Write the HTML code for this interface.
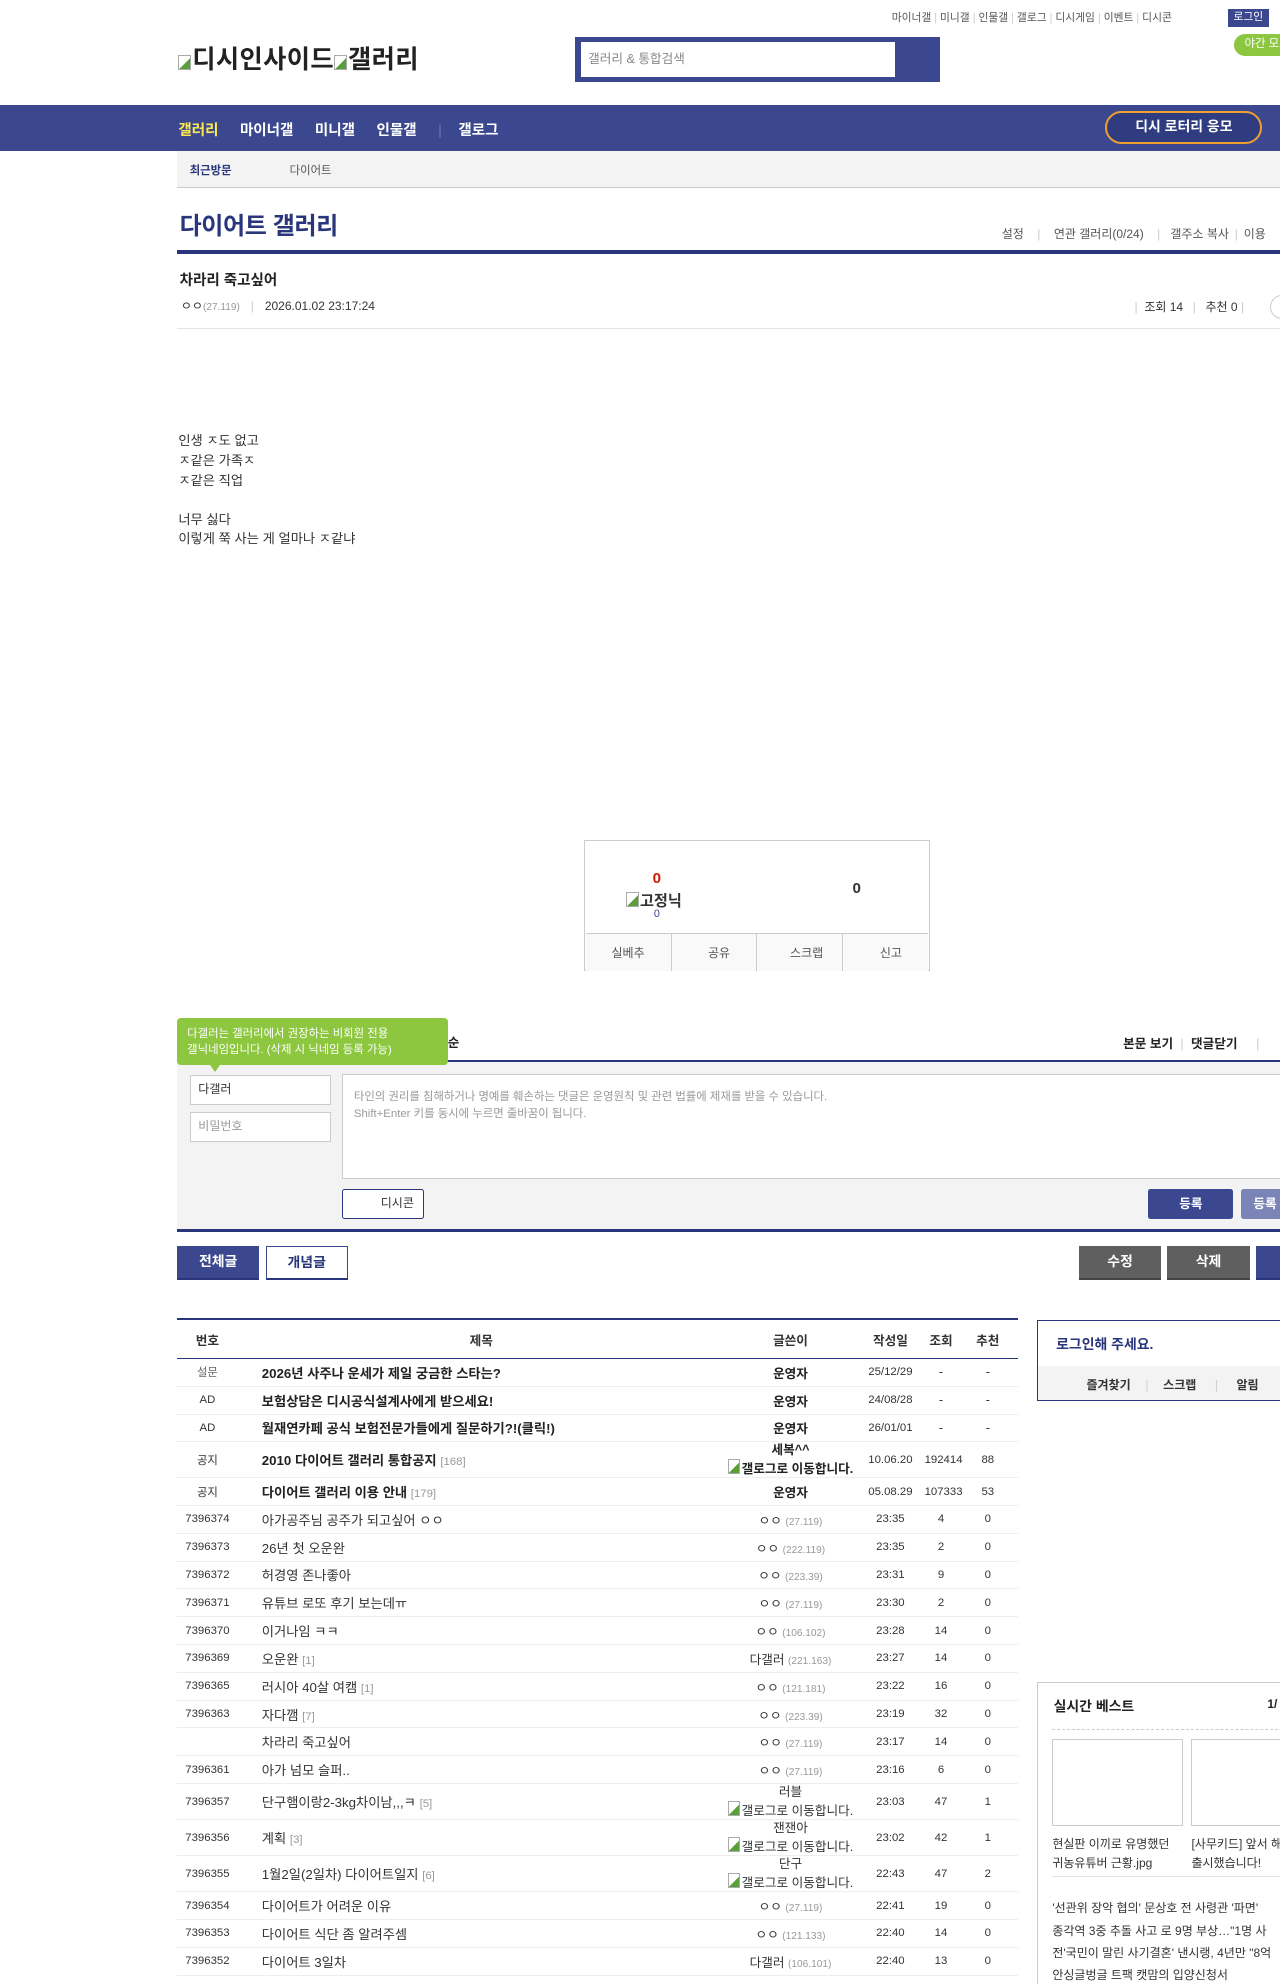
<!DOCTYPE html>
<html><head><meta charset="utf-8">
<style>
html,body{margin:0;padding:0;background:#fff;overflow:hidden}
body{width:1280px;height:1984px}
#w{zoom:1.26482;width:1012px;height:1569px;position:relative;overflow:hidden;font-family:"Liberation Sans","Noto Sans CJK KR",sans-serif;color:#333}
.a{position:absolute;white-space:nowrap}
.bi{display:inline-block;width:10px;height:12px;border:1px solid #aaa;box-sizing:border-box;background:linear-gradient(135deg,#fff 55%,#5a9e3a 56%);vertical-align:-1px;margin-right:1px}
table{border-collapse:collapse;table-layout:fixed;width:665px}
td{font-size:10px;color:#333;text-align:center;border-bottom:1px solid #eee;padding:0;white-space:nowrap;overflow:hidden;vertical-align:middle}
td.t{text-align:left;padding-left:19px;font-size:10.5px}
.b td.t,.b td.w{font-weight:bold;color:#222}
.ip{color:#999;font-size:8px}
.rp{color:#999;font-size:9px}
.w2{line-height:13px}
</style></head><body><div id="w">
<div class="a" style="left:705px;top:8px;font-size:8.5px;color:#555">마이너갤 <span style="color:#ccc">|</span> 미니갤 <span style="color:#ccc">|</span> 인물갤 <span style="color:#ccc">|</span> 갤로그 <span style="color:#ccc">|</span> 디시게임 <span style="color:#ccc">|</span> 이벤트 <span style="color:#ccc">|</span> 디시콘</div>
<div class="a" style="left:971px;top:7px;width:32px;height:14px;background:#3b4890;color:#fff;font-size:8.5px;line-height:14px;text-align:center">로그인</div>
<div class="a" style="left:976px;top:27px;width:50px;height:17px;border-radius:9px;background:#8dc63f;color:#fff;font-size:9px;line-height:17px;padding-left:8px">야간 모드</div>
<div class="a" style="left:141px;top:32px;font-size:20px;font-weight:bold;color:#222;letter-spacing:0.3px"><span class="bi"></span>디시인사이드<span class="bi"></span>갤러리</div>
<div class="a" style="left:455px;top:29px;width:288px;height:36px;background:#3b4890"></div>
<div class="a" style="left:459px;top:33px;width:249px;height:28px;background:#fff;font-size:10px;color:#888;line-height:28px;padding-left:6px;box-sizing:border-box">갤러리 &amp; 통합검색</div>
<div class="a" style="left:0;top:83px;width:1012px;height:36px;background:#3b4890"></div>
<div class="a" style="left:141px;top:94px;font-size:11.5px;font-weight:bold;color:#fff"><span style="color:#ffe94f">갤러리</span><span style="margin-left:17px">마이너갤</span><span style="margin-left:17px">미니갤</span><span style="margin-left:17px">인물갤</span><span style="margin-left:17px;color:#6a75b0;font-weight:normal">|</span><span style="margin-left:13px">갤로그</span></div>
<div class="a" style="left:874px;top:88px;width:124px;height:26px;border:2px solid #f0a030;border-radius:14px;box-sizing:border-box;background:#2f3c80;color:#fff;font-size:11px;font-weight:bold;text-align:center;line-height:22px">디시 로터리 응모</div>
<div class="a" style="left:140px;top:119px;width:872px;height:29px;background:#f3f3f3;border-bottom:1px solid #ccc"></div>
<div class="a" style="left:150px;top:128px;font-size:9px;font-weight:bold;color:#29367c">최근방문</div>
<div class="a" style="left:229px;top:128px;font-size:9px;color:#555">다이어트</div>
<div class="a" style="left:142px;top:163px;font-size:19px;font-weight:bold;color:#29367c;letter-spacing:-0.3px">다이어트 갤러리</div>
<div class="a" style="left:792px;top:178px;font-size:9.5px;color:#555">설정 <span style="color:#ccc;margin:0 8px">|</span> 연관 갤러리(0/24) <span style="color:#ccc;margin:0 8px">|</span>갤주소 복사 <span style="color:#ccc;margin:0 2px">|</span> 이용</div>
<div class="a" style="left:140px;top:198px;width:872px;height:3px;background:#29367c"></div>
<div class="a" style="left:142px;top:213px;font-size:11.5px;font-weight:bold;color:#222">차라리 죽고싶어</div>
<div class="a" style="left:143px;top:235px;font-size:9.5px;color:#333">ㅇㅇ<span class="ip">(27.119)</span> <span style="color:#ccc;margin:0 6px">|</span> 2026.01.02 23:17:24</div>
<div class="a" style="left:897px;top:236px;font-size:9.5px;color:#333"><span style="color:#ccc">|</span>&nbsp; 조회 14 <span style="color:#ccc;margin:0 5px">|</span> 추천 0 <span style="color:#ccc">|</span></div>
<div class="a" style="left:1004px;top:233px;width:18px;height:18px;border:1px solid #ccc;border-radius:50%"></div>
<div class="a" style="left:140px;top:259px;width:872px;height:1px;background:#e5e5e5"></div>
<div class="a" style="left:141px;top:341px;font-size:10.5px;line-height:15.5px;color:#333">인생 ㅈ도 없고<br>ㅈ같은 가족ㅈ<br>ㅈ같은 직업<br><br>너무 싫다<br>이렇게 쭉 사는 게 얼마나 ㅈ같냐</div>
<div class="a" style="left:462px;top:664px;width:273px;height:104px;border:1px solid #ccc;box-sizing:border-box"></div>
<div class="a" style="left:516px;top:688px;font-size:12px;font-weight:bold;color:#d31900">0</div>
<div class="a" style="left:495px;top:703px;font-size:12px;font-weight:bold;color:#333"><span class="bi"></span>고정닉</div>
<div class="a" style="left:517px;top:718px;font-size:8.5px;color:#3b4890">0</div>
<div class="a" style="left:674px;top:696px;font-size:12px;font-weight:bold;color:#333">0</div>
<div class="a" style="left:463px;top:738px;width:271px;height:29px;background:#f9f9f9;border-top:1px solid #ccc;display:flex;font-size:9.5px;color:#555">
<div style="flex:1;border-right:1px solid #ccc;text-align:center;line-height:31px">실베추</div>
<div style="flex:1;border-right:1px solid #ccc;text-align:center;line-height:31px">&nbsp;&nbsp;&nbsp;공유</div>
<div style="flex:1;border-right:1px solid #ccc;text-align:center;line-height:31px">&nbsp;&nbsp;&nbsp;&nbsp;스크랩</div>
<div style="flex:1;text-align:center;line-height:31px">&nbsp;&nbsp;&nbsp;신고</div></div>
<div class="a" style="left:888px;top:817px;font-size:10px;font-weight:bold;color:#222">본문 보기 <span style="color:#ccc;font-weight:normal;margin:0 3px">|</span> 댓글닫기 <span style="color:#ccc;font-weight:normal;margin-left:12px">|</span></div>
<div class="a" style="left:140px;top:838px;width:872px;height:2px;background:#29367c"></div>
<div class="a" style="left:140px;top:840px;width:872px;height:132px;background:#f3f3f3"></div>
<div class="a" style="left:140px;top:805px;width:214px;height:37px;background:#8dc63f;border-radius:3px;color:#fff;font-size:9px;line-height:13px;padding:6px 0 0 8px;box-sizing:border-box">다갤러는 갤러리에서 권장하는 비회원 전용<br>갤닉네임입니다. (삭제 시 닉네임 등록 가능)</div>
<div class="a" style="left:166px;top:842px;width:0;height:0;border-left:4px solid transparent;border-right:4px solid transparent;border-top:6px solid #8dc63f"></div>
<div class="a" style="left:354px;top:816px;font-size:10px;font-weight:bold;color:#222">순</div>
<div class="a" style="left:150px;top:850px;width:112px;height:24px;background:#fff;border:1px solid #ccc;box-sizing:border-box;font-size:9.5px;color:#333;line-height:22px;padding-left:6px">다갤러</div>
<div class="a" style="left:150px;top:879px;width:112px;height:24px;background:#fff;border:1px solid #ccc;box-sizing:border-box;font-size:9.5px;color:#999;line-height:22px;padding-left:6px">비밀번호</div>
<div class="a" style="left:270px;top:849px;width:750px;height:83px;background:#fff;border:1px solid #ccc;box-sizing:border-box;font-size:9px;color:#999;line-height:14px;padding:11px 0 0 9px">타인의 권리를 침해하거나 명예를 훼손하는 댓글은 운영원칙 및 관련 법률에 제재를 받을 수 있습니다.<br>Shift+Enter 키를 동시에 누르면 줄바꿈이 됩니다.</div>
<div class="a" style="left:270px;top:940px;width:65px;height:24px;background:#fff;border:1px solid #29367c;border-radius:2px;box-sizing:border-box;font-size:9.5px;color:#333;line-height:22px;text-align:right;padding-right:7px">디시콘</div>
<div class="a" style="left:908px;top:940px;width:67px;height:24px;background:#3b4890;border-radius:2px;color:#fff;font-size:10px;font-weight:bold;text-align:center;line-height:24px">등록</div>
<div class="a" style="left:981px;top:940px;width:60px;height:24px;background:#7a84b6;border-radius:2px;color:#fff;font-size:10px;font-weight:bold;line-height:24px;padding-left:10px;box-sizing:border-box">등록</div>
<div class="a" style="left:140px;top:972px;width:872px;height:2px;background:#29367c"></div>
<div class="a" style="left:140px;top:985px;width:65px;height:27px;background:#3b4890;border-bottom:2px solid #29367c;box-sizing:border-box;color:#fff;font-size:11px;font-weight:bold;text-align:center;line-height:25px">전체글</div>
<div class="a" style="left:210px;top:985px;width:65px;height:27px;background:#fff;border:1px solid #3b4890;border-bottom:2px solid #29367c;box-sizing:border-box;color:#29367c;font-size:11px;font-weight:bold;text-align:center;line-height:24px">개념글</div>
<div class="a" style="left:853px;top:985px;width:65px;height:27px;background:#5f5f5f;border-bottom:2px solid #444;box-sizing:border-box;color:#fff;font-size:11px;font-weight:bold;text-align:center;line-height:25px">수정</div>
<div class="a" style="left:923px;top:985px;width:65px;height:27px;background:#5f5f5f;border-bottom:2px solid #444;box-sizing:border-box;color:#fff;font-size:11px;font-weight:bold;text-align:center;line-height:25px">삭제</div>
<div class="a" style="left:993px;top:985px;width:40px;height:27px;background:#3b4890;border-bottom:2px solid #29367c;box-sizing:border-box"></div>
<div class="a" style="left:140px;top:1042px;width:665px;height:2px;background:#29367c"></div>
<div class="a" style="left:140px;top:1044px">
<table>
<colgroup><col style="width:48px"><col style="width:385px"><col style="width:104px"><col style="width:54px"><col style="width:26px"><col style="width:48px"></colgroup>
<tr style="height:30px"><td style="font-weight:bold;border-bottom:1px solid #29367c;font-size:10px">번호</td><td style="font-weight:bold;border-bottom:1px solid #29367c">제목</td><td style="font-weight:bold;border-bottom:1px solid #29367c">글쓴이</td><td style="font-weight:bold;border-bottom:1px solid #29367c">작성일</td><td style="font-weight:bold;border-bottom:1px solid #29367c">조회</td><td style="font-weight:bold;border-bottom:1px solid #29367c">추천</td></tr>
<tr class="b" style="height:22px"><td style="font-size:9px;color:#666">설문</td><td class="t">2026년 사주나 운세가 제일 궁금한 스타는?</td><td class="w">운영자</td><td style="font-size:9px">25/12/29</td><td>-</td><td>-</td></tr>
<tr class="b" style="height:22px"><td style="font-size:9px">AD</td><td class="t">보험상담은 디시공식설계사에게 받으세요!</td><td class="w">운영자</td><td style="font-size:9px">24/08/28</td><td>-</td><td>-</td></tr>
<tr class="b" style="height:22px"><td style="font-size:9px">AD</td><td class="t">월재연카페 공식 보험전문가들에게 질문하기?!(클릭!)</td><td class="w">운영자</td><td style="font-size:9px">26/01/01</td><td>-</td><td>-</td></tr>
<tr class="b" style="height:28px"><td style="font-size:9px">공지</td><td class="t">2010 다이어트 갤러리 통합공지 <span class="rp" style="font-weight:normal">[168]</span></td><td class="w w2" style="overflow:visible">세복^^<br><span class="bi"></span>갤로그로 이동합니다.</td><td style="font-size:9px">10.06.20</td><td style="font-size:9px;overflow:visible">192414</td><td style="font-size:9px">88</td></tr>
<tr class="b" style="height:22px"><td style="font-size:9px">공지</td><td class="t">다이어트 갤러리 이용 안내 <span class="rp" style="font-weight:normal">[179]</span></td><td class="w">운영자</td><td style="font-size:9px">05.08.29</td><td style="font-size:9px;overflow:visible">107333</td><td style="font-size:9px">53</td></tr>
<tr style="height:22px"><td style="font-size:9px">7396374</td><td class="t">아가공주님 공주가 되고싶어 ㅇㅇ</td><td>ㅇㅇ <span class="ip">(27.119)</span></td><td style="font-size:9px">23:35</td><td style="font-size:9px">4</td><td style="font-size:9px">0</td></tr>
<tr style="height:22px"><td style="font-size:9px">7396373</td><td class="t">26년 첫 오운완</td><td>ㅇㅇ <span class="ip">(222.119)</span></td><td style="font-size:9px">23:35</td><td style="font-size:9px">2</td><td style="font-size:9px">0</td></tr>
<tr style="height:22px"><td style="font-size:9px">7396372</td><td class="t">허경영 존나좋아</td><td>ㅇㅇ <span class="ip">(223.39)</span></td><td style="font-size:9px">23:31</td><td style="font-size:9px">9</td><td style="font-size:9px">0</td></tr>
<tr style="height:22px"><td style="font-size:9px">7396371</td><td class="t">유튜브 로또 후기 보는데ㅠ</td><td>ㅇㅇ <span class="ip">(27.119)</span></td><td style="font-size:9px">23:30</td><td style="font-size:9px">2</td><td style="font-size:9px">0</td></tr>
<tr style="height:22px"><td style="font-size:9px">7396370</td><td class="t">이거나임 ㅋㅋ</td><td>ㅇㅇ <span class="ip">(106.102)</span></td><td style="font-size:9px">23:28</td><td style="font-size:9px">14</td><td style="font-size:9px">0</td></tr>
<tr style="height:22px"><td style="font-size:9px">7396369</td><td class="t">오운완 <span class="rp">[1]</span></td><td>다갤러 <span class="ip">(221.163)</span></td><td style="font-size:9px">23:27</td><td style="font-size:9px">14</td><td style="font-size:9px">0</td></tr>
<tr style="height:22px"><td style="font-size:9px">7396365</td><td class="t">러시아 40살 여캠 <span class="rp">[1]</span></td><td>ㅇㅇ <span class="ip">(121.181)</span></td><td style="font-size:9px">23:22</td><td style="font-size:9px">16</td><td style="font-size:9px">0</td></tr>
<tr style="height:22px"><td style="font-size:9px">7396363</td><td class="t">자다깸 <span class="rp">[7]</span></td><td>ㅇㅇ <span class="ip">(223.39)</span></td><td style="font-size:9px">23:19</td><td style="font-size:9px">32</td><td style="font-size:9px">0</td></tr>
<tr style="height:22px"><td></td><td class="t">차라리 죽고싶어</td><td>ㅇㅇ <span class="ip">(27.119)</span></td><td style="font-size:9px">23:17</td><td style="font-size:9px">14</td><td style="font-size:9px">0</td></tr>
<tr style="height:22px"><td style="font-size:9px">7396361</td><td class="t">아가 넘모 슬퍼..</td><td>ㅇㅇ <span class="ip">(27.119)</span></td><td style="font-size:9px">23:16</td><td style="font-size:9px">6</td><td style="font-size:9px">0</td></tr>
<tr style="height:28.5px"><td style="font-size:9px">7396357</td><td class="t">단구햄이랑2-3kg차이남,,,ㅋ <span class="rp">[5]</span></td><td class="w2" style="overflow:visible">러블<br><span class="bi"></span>갤로그로 이동합니다.</td><td style="font-size:9px">23:03</td><td style="font-size:9px">47</td><td style="font-size:9px">1</td></tr>
<tr style="height:28.5px"><td style="font-size:9px">7396356</td><td class="t">계획 <span class="rp">[3]</span></td><td class="w2" style="overflow:visible">잰잰아<br><span class="bi"></span>갤로그로 이동합니다.</td><td style="font-size:9px">23:02</td><td style="font-size:9px">42</td><td style="font-size:9px">1</td></tr>
<tr style="height:28.5px"><td style="font-size:9px">7396355</td><td class="t">1월2일(2일차) 다이어트일지 <span class="rp">[6]</span></td><td class="w2" style="overflow:visible">단구<br><span class="bi"></span>갤로그로 이동합니다.</td><td style="font-size:9px">22:43</td><td style="font-size:9px">47</td><td style="font-size:9px">2</td></tr>
<tr style="height:22px"><td style="font-size:9px">7396354</td><td class="t">다이어트가 어려운 이유</td><td>ㅇㅇ <span class="ip">(27.119)</span></td><td style="font-size:9px">22:41</td><td style="font-size:9px">19</td><td style="font-size:9px">0</td></tr>
<tr style="height:22px"><td style="font-size:9px">7396353</td><td class="t">다이어트 식단 좀 알려주셈</td><td>ㅇㅇ <span class="ip">(121.133)</span></td><td style="font-size:9px">22:40</td><td style="font-size:9px">14</td><td style="font-size:9px">0</td></tr>
<tr style="height:22px"><td style="font-size:9px">7396352</td><td class="t">다이어트 3일차</td><td>다갤러 <span class="ip">(106.101)</span></td><td style="font-size:9px">22:40</td><td style="font-size:9px">13</td><td style="font-size:9px">0</td></tr>
</table></div>
<div class="a" style="left:820px;top:1044px;width:200px;height:64px;border:1px solid #29367c;box-sizing:border-box"></div>
<div class="a" style="left:835px;top:1055px;font-size:11px;font-weight:bold;color:#29367c">로그인해 주세요.</div>
<div class="a" style="left:821px;top:1080px;width:200px;height:27px;background:#f3f3f3"></div>
<div class="a" style="left:859px;top:1088px;font-size:9.5px;font-weight:bold;color:#333">즐겨찾기 <span style="color:#ccc;font-weight:normal;margin:0 9px">|</span> 스크랩 <span style="color:#ccc;font-weight:normal;margin:0 12px">|</span> 알림</div>
<div class="a" style="left:820px;top:1330px;width:210px;height:260px;border:1px solid #ccc;box-sizing:border-box"></div>
<div class="a" style="left:833px;top:1341px;font-size:11px;font-weight:bold;color:#222">실시간 베스트</div>
<div class="a" style="left:1002px;top:1342px;font-size:9.5px;font-weight:bold;color:#222">1/</div>
<div class="a" style="left:832px;top:1367px;width:190px;border-top:1px dashed #ccc"></div>
<div class="a" style="left:832px;top:1375px;width:103px;height:69px;border:1px solid #ccc;box-sizing:border-box"></div>
<div class="a" style="left:942px;top:1375px;width:103px;height:69px;border:1px solid #ccc;box-sizing:border-box"></div>
<div class="a" style="left:832px;top:1451px;font-size:9.5px;line-height:14.5px;color:#333">현실판 이끼로 유명했던<br>귀농유튜버 근황.jpg</div>
<div class="a" style="left:942px;top:1451px;font-size:9.5px;line-height:14.5px;color:#333">[사무키드] 앞서 해<br>출시했습니다!</div>
<div class="a" style="left:832px;top:1483px;width:190px;height:1px;background:#e5e5e5"></div>
<div class="a" style="left:832px;top:1500px;font-size:9.5px;line-height:17.7px;color:#333">'선관위 장악 협의' 문상호 전 사령관 '파면'<br>종각역 3중 추돌 사고 로 9명 부상…"1명 사<br>전'국민이 말린 사기결혼' 낸시랭, 4년만 "8억<br>안싱글벙글 트팩 캣맘의 입양신청서</div>
</div></body></html>
